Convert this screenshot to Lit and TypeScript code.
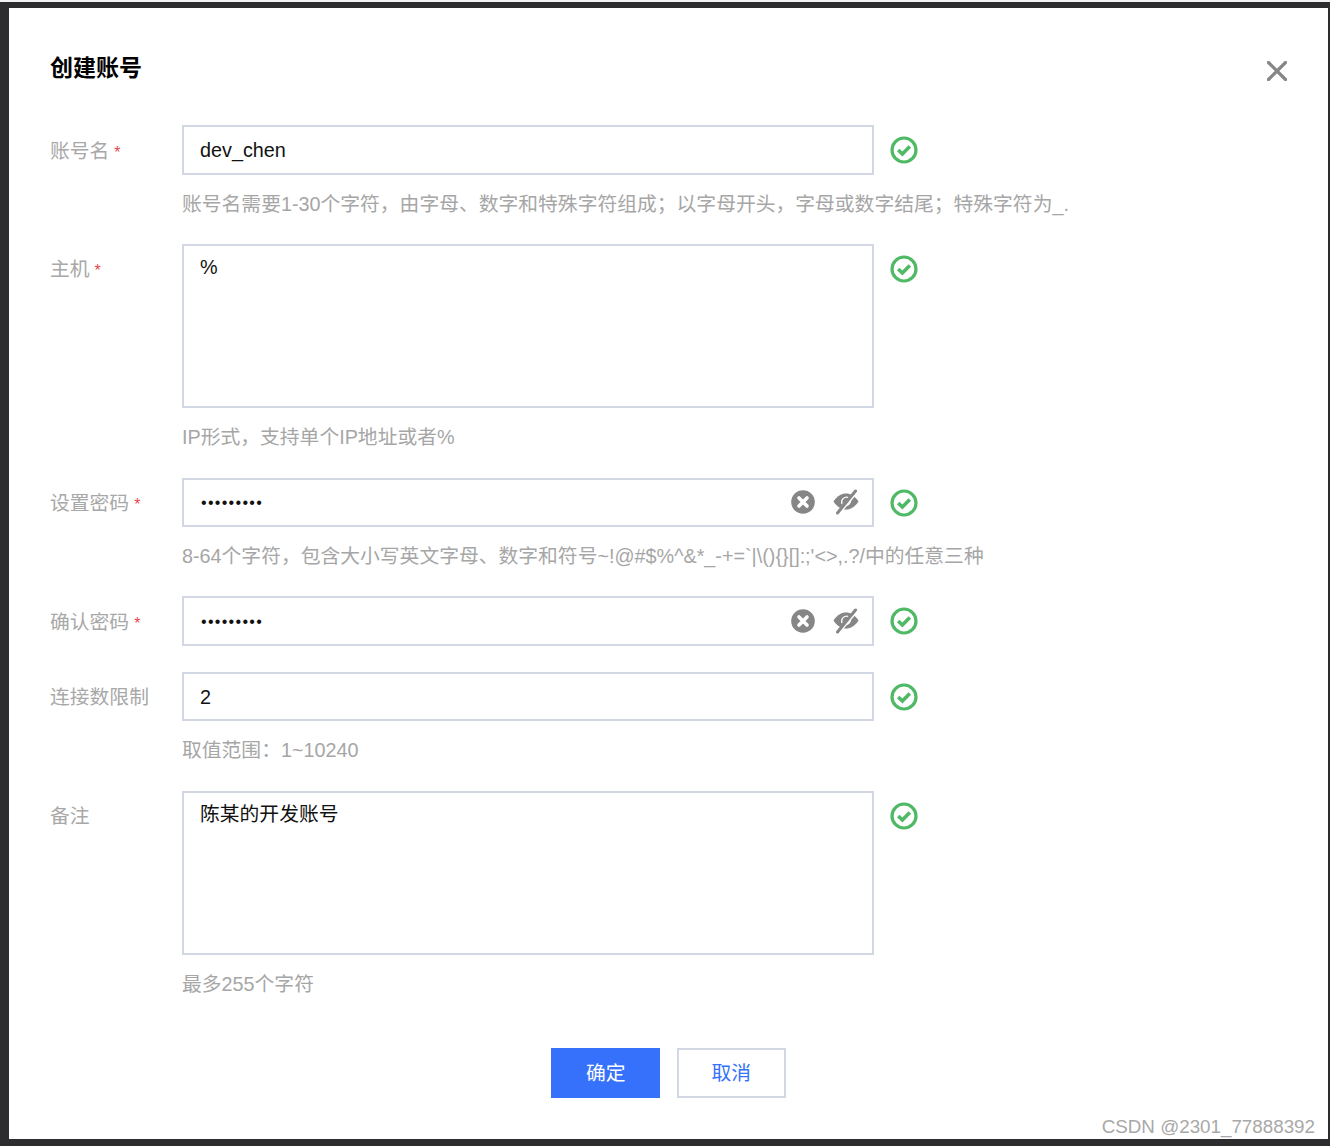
import { LitElement, html, css, svg } from "lit";
import { customElement } from "lit/decorators.js";

type Row = { label: string; req?: boolean; value: string; area?: boolean; pwd?: boolean; hint?: string };

const rows: Row[] = [
  { label: "账号名", req: true, value: "dev_chen", hint: "账号名需要1-30个字符，由字母、数字和特殊字符组成；以字母开头，字母或数字结尾；特殊字符为_." },
  { label: "主机", req: true, value: "%", area: true, hint: "IP形式，支持单个IP地址或者%" },
  { label: "设置密码", req: true, value: "•••••••••", pwd: true, hint: "8-64个字符，包含大小写英文字母、数字和符号~!@#$%^&*_-+=`|\\(){}[]:;'<>,.?/中的任意三种" },
  { label: "确认密码", req: true, value: "•••••••••", pwd: true },
  { label: "连接数限制", value: "2", hint: "取值范围：1~10240" },
  { label: "备注", value: "陈某的开发账号", area: true, hint: "最多255个字符" },
];

const check = svg`<circle cx="14" cy="14" r="12" fill="none" stroke="#4fb965" stroke-width="3.200"/><path d="M8.200 14l4.200 4 7.400-7.400" fill="none" stroke="#4fb965" stroke-width="3.600"/>`;
const clear = svg`<circle cx="12" cy="12" r="11.800" fill="#868686"/><path d="M8 8l8 8M16 8l-8 8" stroke="#fff" stroke-width="3.600" stroke-linecap="round"/>`;
const eye = svg`<path d="M0.500 12.500C4 7 8.500 4.500 13 4.500s9 2.500 12.500 8C22 18 17.500 20.500 13 20.500S4 18 0.500 12.500z" fill="#868686"/><path d="M9 15a5 5 0 0 1 6.500-6.500" fill="none" stroke="#fff" stroke-width="1.200"/><path d="M17.500 10.500a5 5 0 0 1-6 6" fill="none" stroke="#fff" stroke-width="1.200"/><path d="M5 24.500L23.500 2.500" stroke="#fff" stroke-width="4"/><path d="M4.500 24L22.500 2" stroke="#868686" stroke-width="3" stroke-linecap="round"/>`;

@customElement("app-root")
export class AppRoot extends LitElement {
  static styles = css`
    :host {
      display: block;
      box-sizing: border-box;
      width: 1330px;
      height: 1146px;
      padding: 8px 2px 7px 9px;
      background: linear-gradient(#f2f2f2 0 2px, #2d2d2f 2px);
      font-family: "Liberation Sans", "Noto Sans CJK SC", sans-serif;
      font-size: 19.800px;
      position: relative;
    }
    .dialog {
      box-sizing: border-box;
      height: 100%;
      background: #fff;
      padding: 45px 41px 0;
      display: flex;
      flex-direction: column;
    }
    .head {
      display: flex;
      justify-content: space-between;
      align-items: flex-start;
      height: 30px;
      margin-bottom: 42px;
    }
    .title {
      font-size: 23px;
      font-weight: 700;
      line-height: 30px;
      color: #000;
    }
    .close {
      width: 20px;
      height: 20px;
      margin-top: 8px;
      display: block;
    }
    .row {
      display: grid;
      grid-template-columns: 132px 692px 28px;
      column-gap: 0;
      margin-bottom: 25.900px;
    }
    .label {
      box-sizing: border-box;
      height: 49.500px;
      line-height: 49.500px;
      padding-top: 1.500px;
      color: #a8a8a8;
      white-space: nowrap;
    }
    .star {
      color: #e5484d;
      font-size: 16px;
      margin-left: 5px;
    }
    .field {
      box-sizing: border-box;
      height: 49.500px;
      border: 2px solid #d2d7e4;
      padding: 1px 13px 0 16px;
      display: flex;
      align-items: center;
      color: #111;
      line-height: 24px;
    }
    .field.area {
      height: 164.500px;
      align-items: flex-start;
      padding-top: 9px;
    }
    .value {
      flex: 1;
    }
    .dots {
      font-size: 16px;
      letter-spacing: 1.300px;
      padding-left: 1px;
    }
    .tools {
      display: flex;
      align-items: center;
      gap: 18px;
      margin-top: -1px;
    }
    .tools svg {
      display: block;
    }
    .ok {
      display: block;
      margin: 11px 0 0 16px;
      width: 28px;
      height: 28px;
    }
    .hint {
      grid-column: 2 / 4;
      margin-top: 17px;
      margin-bottom: 2.400px;
      line-height: 24px;
      height: 24px;
      color: #a6a6a6;
      white-space: nowrap;
    }
    .foot {
      display: flex;
      justify-content: center;
      gap: 16.500px;
      margin-top: 23.500px;
    }
    .btn {
      box-sizing: border-box;
      width: 109px;
      height: 50px;
      line-height: 46px;
      text-align: center;
      border: 2px solid #d2d7e4;
      color: #3671fb;
      background: #fff;
    }
    .btn.primary {
      background: #3671fb;
      border-color: #3671fb;
      color: #fff;
    }
    .mark {
      position: absolute;
      right: 15px;
      bottom: 7px;
      font-size: 18.800px;
      line-height: 24px;
      color: #a8a8a8;
    }
  `;

  render() {
    return html`
      <div class="dialog">
        <div class="head">
          <div class="title">创建账号</div>
          <svg class="close" viewBox="0 0 20 20"><path d="M1.500 1.500l17 17M18.500 1.500l-17 17" stroke="#868686" stroke-width="3.200" stroke-linecap="round"/></svg>
        </div>
        ${rows.map((r) => html`
          <div class="row">
            <div class="label">${r.label}${r.req ? html`<span class="star">*</span>` : ""}</div>
            <div class="field ${r.area ? "area" : ""}">
              <span class="value ${r.pwd ? "dots" : ""}">${r.value}</span>
              ${r.pwd ? html`<span class="tools">
                <svg width="24" height="24" viewBox="0 0 24 24">${clear}</svg>
                <svg width="26" height="26" viewBox="0 0 26 26">${eye}</svg>
              </span>` : ""}
            </div>
            <svg class="ok" viewBox="0 0 28 28">${check}</svg>
            ${r.hint ? html`<div class="hint">${r.hint}</div>` : ""}
          </div>
        `)}
        <div class="foot">
          <div class="btn primary">确定</div>
          <div class="btn">取消</div>
        </div>
      </div>
      <div class="mark">CSDN @2301_77888392</div>
    `;
  }
}
